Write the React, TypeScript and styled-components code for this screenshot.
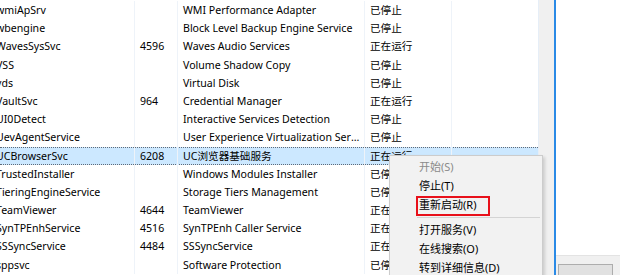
import React from "react";
import styled, { createGlobalStyle } from "styled-components";

const GlobalStyle = createGlobalStyle`
  html, body {
    margin: 0;
    padding: 0;
    width: 620px;
    height: 275px;
    overflow: hidden;
    background: #ffffff;
  }
  body {
    font-family: "Noto Sans", "Noto Sans CJK SC", sans-serif;
    font-size: 10.6px;
    color: #000;
  }
`;

type Service = {
  name: string;
  pid: string;
  desc: string;
  status: string;
  selected?: boolean;
};

const SERVICES: Service[] = [
  { name: "wmiApSrv", pid: "", desc: "WMI Performance Adapter", status: "已停止" },
  { name: "wbengine", pid: "", desc: "Block Level Backup Engine Service", status: "已停止" },
  { name: "WavesSysSvc", pid: "4596", desc: "Waves Audio Services", status: "正在运行" },
  { name: "VSS", pid: "", desc: "Volume Shadow Copy", status: "已停止" },
  { name: "vds", pid: "", desc: "Virtual Disk", status: "已停止" },
  { name: "VaultSvc", pid: "964", desc: "Credential Manager", status: "正在运行" },
  { name: "UI0Detect", pid: "", desc: "Interactive Services Detection", status: "已停止" },
  { name: "UevAgentService", pid: "", desc: "User Experience Virtualization Service", status: "已停止" },
  { name: "UCBrowserSvc", pid: "6208", desc: "UC浏览器基础服务", status: "正在运行", selected: true },
  { name: "TrustedInstaller", pid: "", desc: "Windows Modules Installer", status: "已停止" },
  { name: "TieringEngineService", pid: "", desc: "Storage Tiers Management", status: "已停止" },
  { name: "TeamViewer", pid: "4644", desc: "TeamViewer", status: "正在运行" },
  { name: "SynTPEnhService", pid: "4516", desc: "SynTPEnh Caller Service", status: "正在运行" },
  { name: "SSSyncService", pid: "4484", desc: "SSSyncService", status: "正在运行" },
  { name: "sppsvc", pid: "", desc: "Software Protection", status: "已停止" },
];

type MenuEntry = { label: string; disabled?: boolean; marked?: boolean } | "sep";

const MENU: MenuEntry[] = [
  { label: "开始(S)", disabled: true },
  { label: "停止(T)" },
  { label: "重新启动(R)", marked: true },
  "sep",
  { label: "打开服务(V)" },
  { label: "在线搜索(O)" },
  { label: "转到详细信息(D)" },
];

const App: React.FC = () => {
  return (
    <>
      <GlobalStyle />
      <Window>
        <ListPane>
          <List>
            {SERVICES.map((s) => (
              <Row key={s.name} $selected={s.selected}>
                <NameCell>{s.name}</NameCell>
                <Cell>{s.pid}</Cell>
                <Cell>{s.desc}</Cell>
                <Cell>{s.status}</Cell>
                <Cell />
              </Row>
            ))}
          </List>
          <Strip />
        </ListPane>
        <Divider />
        <SidePane>
          <SideBody />
          <Footer>
            <FooterButton />
          </Footer>
        </SidePane>

        <Menu>
          {MENU.map((m, i) =>
            m === "sep" ? (
              <Separator key={i} />
            ) : (
              <MenuItem key={i} $disabled={m.disabled}>
                {m.label}
                {m.marked && <Mark />}
              </MenuItem>
            )
          )}
        </Menu>
      </Window>
    </>
  );
};

const Window = styled.div`
  position: relative;
  width: 620px;
  height: 275px;
  display: flex;
  overflow: hidden;
`;

const ListPane = styled.div`
  width: 554px;
  display: flex;
  flex-shrink: 0;
`;

const List = styled.div`
  width: 538px;
  padding-top: 1px;
  display: flex;
  flex-direction: column;
  border-right: 1px solid #e6eef7;
`;

const Row = styled.div<{ $selected?: boolean }>`
  height: 18.2px;
  box-sizing: border-box;
  display: grid;
  grid-template-columns: 135px 43px 187px 87px 1fr;
  align-items: stretch;
  line-height: 18px;
  background: ${(p) => (p.$selected ? "#cce8ff" : "transparent")};
  border-top: 1px dotted ${(p) => (p.$selected ? "#5f6b78" : "transparent")};
  border-bottom: 1px dotted ${(p) => (p.$selected ? "#5f6b78" : "transparent")};
`;

const Cell = styled.div`
  padding-left: 5px;
  padding-right: 3px;
  border-right: 1px solid #eef3f9;
  white-space: nowrap;
  overflow: hidden;
  text-overflow: ellipsis;
  margin-top: -1px;
  margin-bottom: -1px;
  &:last-child {
    border-right: none;
  }
`;

const NameCell = styled(Cell)`
  padding-left: 0;
  text-indent: -4px;
`;

const Strip = styled.div`
  flex: 1;
  background: #f0f0f0;
`;

const Divider = styled.div`
  width: 2px;
  flex-shrink: 0;
  background: #2a8ae6;
`;

const SidePane = styled.div`
  flex: 1;
  display: flex;
  flex-direction: column;
`;

const SideBody = styled.div`
  height: 263px;
  background: #ffffff;
  border-bottom: 1px solid #e3e3e3;
  box-sizing: border-box;
`;

const Footer = styled.div`
  flex: 1;
  background: #f0f0f0;
  padding: 8px 7px 0 2px;
`;

const FooterButton = styled.div`
  height: 10px;
  border: 1px solid #adadad;
  border-bottom: none;
  background: #e1e1e1;
`;

const Menu = styled.div`
  position: absolute;
  left: 389px;
  top: 155px;
  width: 154px;
  height: 140px;
  box-sizing: border-box;
  padding: 1px 2px;
  background: #f2f2f2;
  border: 1px solid #cccccc;
  box-shadow: 2px 2px 3px rgba(0, 0, 0, 0.15);
  display: flex;
  flex-direction: column;
`;

const MenuItem = styled.div<{ $disabled?: boolean }>`
  position: relative;
  height: 19px;
  line-height: 19px;
  padding-left: 27px;
  font-size: 11px;
  color: ${(p) => (p.$disabled ? "#8a8a8a" : "#000")};
  white-space: nowrap;
`;

const Mark = styled.span`
  position: absolute;
  left: 24px;
  top: 1px;
  width: 74px;
  height: 20px;
  box-sizing: border-box;
  border: 2px solid #e8101a;
`;

const Separator = styled.div`
  height: 6px;
  margin-left: 25px;
  display: flex;
  align-items: center;
  &::after {
    content: "";
    flex: 1;
    height: 1px;
    background: #d4d4d4;
  }
`;

export default App;
